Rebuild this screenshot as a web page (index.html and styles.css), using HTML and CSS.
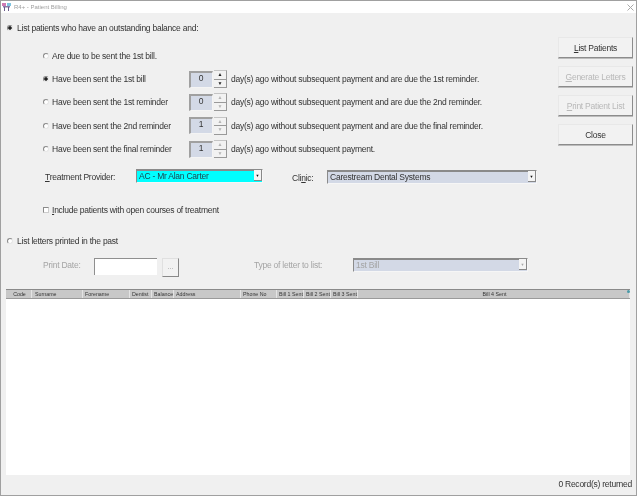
FILE: index.html
```html
<!DOCTYPE html>
<html lang="en">
<head>
<meta charset="utf-8">
<title>R4+ - Patient Billing</title>
<link rel="stylesheet" href="styles.css">
</head>
<body>
<div class="window">
  <header class="titlebar">
    <svg class="app-icon" width="9" height="9" viewBox="0 0 9 9"><rect x="0" y="0" width="4" height="3" fill="#d07ab4"/><rect x="5" y="0" width="4" height="3" fill="#7fc4e0"/><path d="M1 3h7v1.500H1z" fill="#8a7aa8"/><path d="M2.500 4v4M6.500 4v4" stroke="#6b5a8c" stroke-width="1"/></svg>
    <span class="title">R4+ - Patient Billing</span>
    <svg class="close-x" width="7" height="7" viewBox="0 0 7 7"><path d="M.5.5l6 6M6.500.5l-6 6" stroke="#a8a8a8" stroke-width="1" fill="none"/></svg>
  </header>
  <div class="top">
    <main class="form">
      <div class="main-option"><span class="radio on"></span><span>List patients who have an outstanding balance and:</span></div>
      <div class="options">
        <div class="opt"><span class="radio"></span><span class="opt-label">Are due to be sent the 1st bill.</span></div>
        <div class="opt"><span class="radio on"></span><span class="opt-label">Have been sent the 1st bill</span>
          <span class="spin-field">0</span><span class="spin"><i class="up">▲</i><i class="down">▼</i></span>
          <span class="opt-tail">day(s) ago without subsequent payment and are due the 1st reminder.</span></div>
        <div class="opt"><span class="radio"></span><span class="opt-label">Have been sent the 1st reminder</span>
          <span class="spin-field">0</span><span class="spin off"><i class="up">▲</i><i class="down">▼</i></span>
          <span class="opt-tail">day(s) ago without subsequent payment and are due the 2nd reminder.</span></div>
        <div class="opt"><span class="radio"></span><span class="opt-label">Have been sent the 2nd reminder</span>
          <span class="spin-field">1</span><span class="spin off"><i class="up">▲</i><i class="down">▼</i></span>
          <span class="opt-tail">day(s) ago without subsequent payment and are due the final reminder.</span></div>
        <div class="opt"><span class="radio"></span><span class="opt-label">Have been sent the final reminder</span>
          <span class="spin-field">1</span><span class="spin off"><i class="up">▲</i><i class="down">▼</i></span>
          <span class="opt-tail">day(s) ago without subsequent payment.</span></div>
      </div>
      <div class="provider-row">
        <span class="provider-label"><u>T</u>reatment Provider:</span>
        <span class="combo provider"><span class="combo-text">AC - Mr Alan Carter</span><i class="combo-btn">▼</i></span>
        <span class="clinic-label">Cli<u>n</u>ic:</span>
        <span class="combo clinic"><span class="combo-text">Carestream Dental Systems</span><i class="combo-btn">▼</i></span>
      </div>
      <div class="check-row"><span class="check"></span><span><u>I</u>nclude patients with open courses of treatment</span></div>
      <div class="main-option past"><span class="radio"></span><span>List letters printed in the past</span></div>
      <div class="past-row">
        <span class="print-label">Print Date:</span>
        <span class="date-field"></span>
        <span class="dots">...</span>
        <span class="type-label">Type of letter to list:</span>
        <span class="combo type"><span class="combo-text">1st Bill</span><i class="combo-btn">▼</i></span>
      </div>
    </main>
    <aside class="actions">
      <button class="btn"><u>L</u>ist Patients</button>
      <button class="btn off"><u>G</u>enerate Letters</button>
      <button class="btn off"><u>P</u>rint Patient List</button>
      <button class="btn">Close</button>
    </aside>
  </div>
  <section class="grid">
    <div class="grid-head">
      <span class="c-code">Code</span><span class="c-sur">Surname</span><span class="c-fore">Forename</span><span class="c-dent">Dentist</span><span class="c-bal">Balance</span><span class="c-addr">Address</span><span class="c-phone">Phone No</span><span class="c-b1">Bill 1 Sent</span><span class="c-b2">Bill 2 Sent</span><span class="c-b3">Bill 3 Sent</span><span class="c-b4">Bill 4 Sent</span>
      <i class="dot"></i>
    </div>
    <div class="grid-body"></div>
  </section>
  <footer class="status">0 Record(s) returned</footer>
</div>
</body>
</html>
```
FILE: styles.css
```css
* { box-sizing: border-box; }
html, body { margin: 0; padding: 0; background: #fff; }
body { width: 638px; height: 497px; overflow: hidden; font-family: "Liberation Sans", Arial, sans-serif; font-size: 8.5px; letter-spacing: -0.24px; color: #333; }
u { text-decoration: underline; text-underline-offset: 1px; text-decoration-thickness: 1px; }
i { font-style: normal; }

.window { width: 637px; height: 496px; display: flex; flex-direction: column; background: #f0f0f0; border: 1px solid #a0a0a0; filter: blur(0.3px); }

.titlebar { height: 12px; flex: none; background: #fff; display: flex; align-items: center; padding: 0 2px 0 1px; }
.app-icon { flex: none; }
.title { margin-left: 3px; font-size: 6px; letter-spacing: 0; color: #a0a0a0; }
.close-x { margin-left: auto; }

.top { height: 276px; flex: none; display: flex; }
.form { flex: 1; min-width: 0; padding-left: 6px; }
.actions { width: 78px; flex: none; display: flex; flex-direction: column; gap: 8px; padding-top: 24px; padding-right: 3px; }

.main-option { height: 12px; margin-top: 9px; display: flex; align-items: center; gap: 4px; }
.options { margin-top: 10px; }
.opt { height: 23.4px; display: flex; align-items: center; padding-left: 36px; }
.opt-label { margin-left: 3px; width: 137px; flex: none; }
.opt-tail { margin-left: 4px; white-space: nowrap; }

.radio { width: 6px; height: 6px; flex: none; border-radius: 50%; border: 1px solid #8a8a8a; border-right-color: #e6e6e6; border-bottom-color: #e6e6e6; background: #fff; }
.radio.on { background: radial-gradient(circle, #222 0 1.500px, #fff 2px); }

.spin-field { width: 24px; height: 17px; flex: none; background: #d3d9e6; border: 1px solid #f4f4f4; border-top: 2px solid #a0a0a0; border-left: 2px solid #a0a0a0; text-align: center; line-height: 10px; padding-right: 1px; }
.spin { width: 13px; height: 18px; flex: none; margin-left: 1px; display: flex; flex-direction: column; border-top: 1px solid #c4c4c4; border-bottom: 1px solid #999; border-right: 1px solid #999; }
.spin i { flex: 1; font-size: 5px; letter-spacing: 0; line-height: 7px; text-align: center; color: #222; background: #f2f2f2; }
.spin .up { border-bottom: 1px solid #999; }
.spin.off i { color: #b5b5b5; }

.provider-row { display: flex; align-items: flex-start; height: 17px; margin-top: 8px; padding-left: 38px; }
.provider-label { width: 91px; flex: none; margin-top: 3px; }
.clinic-label { margin-left: 29px; width: 35px; flex: none; margin-top: 4px; }
.combo { height: 14px; flex: none; display: flex; align-items: center; background: #d3d9e6; border: 1px solid #f6f6f6; border-top: 1px solid #8a8a8a; border-left: 1px solid #8a8a8a; box-shadow: inset 0 1px 0 #8a8a8a; padding-left: 2px; }
.combo-text { flex: 1; white-space: nowrap; }
.combo-btn { width: 8px; height: 11px; flex: none; background: #f4f4f4; color: #111; font-size: 4px; letter-spacing: 0; line-height: 11px; text-align: center; border-right: 1px solid #888; border-bottom: 1px solid #888; }
.provider { width: 127px; background: #00ffff; color: #1d3f4a; }
.clinic { width: 210px; margin-top: 1px; }
.type { width: 175px; color: #a4a4a4; }
.type .combo-btn { color: #a8a8a8; }

.check-row { display: flex; align-items: center; gap: 3px; height: 12px; margin-top: 18px; padding-left: 36px; }
.check { width: 6px; height: 6px; flex: none; background: #fff; border: 1px solid #8a8a8a; border-right-color: #ccc; border-bottom-color: #ccc; }
.main-option.past { margin-top: 19px; }

.past-row { display: flex; align-items: flex-start; height: 20px; margin-top: 11px; padding-left: 36px; color: #a4a4a4; }
.print-label { width: 51px; flex: none; margin-top: 2px; }
.date-field { width: 63px; height: 17px; flex: none; background: #fff; border-top: 1px solid #8f8f8f; border-left: 1px solid #8f8f8f; }
.dots { width: 17px; height: 19px; flex: none; margin-left: 5px; background: #f2f2f2; border-right: 1px solid #888; border-bottom: 1px solid #888; border-top: 1px solid #e0e0e0; border-left: 1px solid #e0e0e0; text-align: center; line-height: 16px; font-size: 8px; }
.type-label { width: 99px; flex: none; margin-left: 75px; margin-top: 2px; }

.btn { width: 75px; height: 21px; padding: 0; flex: none; font: inherit; letter-spacing: inherit; color: #333; background: #f2f2f2; border: 1px solid #e8e8e8; border-right: 1px solid #8c8c8c; border-bottom: 1px solid #8c8c8c; box-shadow: 0 1px 0 #bcbcbc; }
.btn.off { color: #b8b8b8; }

.grid { flex: 1; min-height: 0; margin: 0 6px 0 5px; display: flex; flex-direction: column; }
.grid-head { height: 10px; flex: none; display: flex; position: relative; background: #c8c8c8; border-top: 1px solid #8a8a8a; border-bottom: 1px solid #9a9a9a; font-size: 5.300px; letter-spacing: 0; line-height: 8px; color: #333; }
.grid-head span { flex: none; padding-left: 2px; border-right: 1px solid #e4e4e4; white-space: nowrap; overflow: hidden; }
.grid-head .c-sur { padding-left: 3px; }
.grid-head .c-code, .grid-head .c-b4 { text-align: center; }
.c-code { width: 26px; }
.c-sur { width: 51px; }
.c-fore { width: 47px; }
.c-dent { width: 22px; }
.c-bal { width: 22px; }
.c-addr { width: 67px; }
.c-phone { width: 36px; }
.c-b1, .c-b2, .c-b3 { width: 27px; }
.c-b4 { width: 272px; }
.dot { position: absolute; right: 0; top: 0; width: 3px; height: 3px; border-radius: 50%; background: #4a9aa8; }
.grid-body { flex: 1; background: #fff; }

.status { height: 20px; flex: none; text-align: right; padding-right: 4px; line-height: 18px; }
```
